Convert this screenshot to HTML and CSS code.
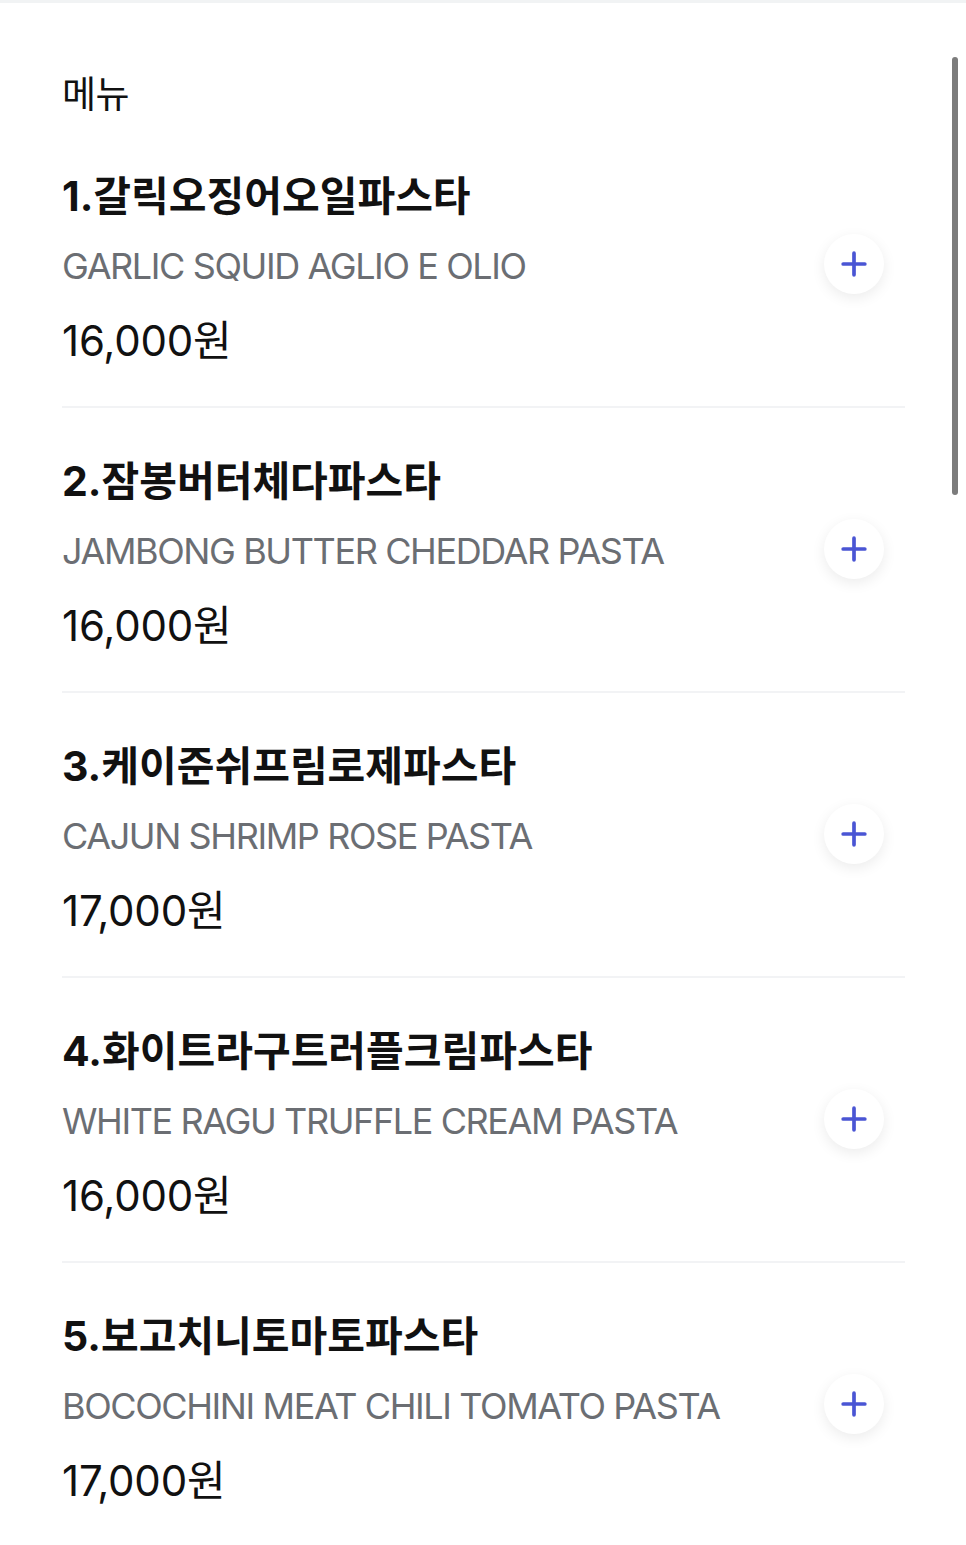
FILE: index.html
```html
<!DOCTYPE html>
<html lang="ko">
<head>
  <meta charset="UTF-8">
  <meta name="viewport" content="width=device-width, initial-scale=1.0">
  <title>메뉴</title>
  <link rel="stylesheet" href="styles.css">
</head>
<body>
  <main class="menu">
    <h2 class="menu-title">메뉴</h2>

    <ul class="menu-list">
      <li class="menu-item">
        <div class="item-text">
          <p class="item-name">1.갈릭오징어오일파스타</p>
          <p class="item-eng">GARLIC SQUID AGLIO E OLIO</p>
          <p class="item-price">16,000원</p>
        </div>
        <button class="add-btn" aria-label="추가">
          <svg viewBox="0 0 24 24" width="26" height="26"><path d="M12 2v20M2 12h20" stroke="currentColor" stroke-width="3.4" stroke-linecap="round"/></svg>
        </button>
      </li>
      <li class="menu-item">
        <div class="item-text">
          <p class="item-name">2.잠봉버터체다파스타</p>
          <p class="item-eng">JAMBONG BUTTER CHEDDAR PASTA</p>
          <p class="item-price">16,000원</p>
        </div>
        <button class="add-btn" aria-label="추가">
          <svg viewBox="0 0 24 24" width="26" height="26"><path d="M12 2v20M2 12h20" stroke="currentColor" stroke-width="3.4" stroke-linecap="round"/></svg>
        </button>
      </li>
      <li class="menu-item">
        <div class="item-text">
          <p class="item-name">3.케이준쉬프림로제파스타</p>
          <p class="item-eng">CAJUN SHRIMP ROSE PASTA</p>
          <p class="item-price">17,000원</p>
        </div>
        <button class="add-btn" aria-label="추가">
          <svg viewBox="0 0 24 24" width="26" height="26"><path d="M12 2v20M2 12h20" stroke="currentColor" stroke-width="3.4" stroke-linecap="round"/></svg>
        </button>
      </li>
      <li class="menu-item">
        <div class="item-text">
          <p class="item-name">4.화이트라구트러플크림파스타</p>
          <p class="item-eng">WHITE RAGU TRUFFLE CREAM PASTA</p>
          <p class="item-price">16,000원</p>
        </div>
        <button class="add-btn" aria-label="추가">
          <svg viewBox="0 0 24 24" width="26" height="26"><path d="M12 2v20M2 12h20" stroke="currentColor" stroke-width="3.4" stroke-linecap="round"/></svg>
        </button>
      </li>
      <li class="menu-item">
        <div class="item-text">
          <p class="item-name">5.보고치니토마토파스타</p>
          <p class="item-eng">BOCOCHINI MEAT CHILI TOMATO PASTA</p>
          <p class="item-price">17,000원</p>
        </div>
        <button class="add-btn" aria-label="추가">
          <svg viewBox="0 0 24 24" width="26" height="26"><path d="M12 2v20M2 12h20" stroke="currentColor" stroke-width="3.4" stroke-linecap="round"/></svg>
        </button>
      </li>
    </ul>
  </main>

  <div class="scrollbar"></div>
</body>
</html>
```

FILE: styles.css
```css
body {
  font-family: Inter, "Noto Sans CJK KR", sans-serif;
  margin: 0;
  padding: 0;
  background-color: #fff;
  color: #111;
}

.menu {
  border-top: 3px solid #f1f3f4;
  padding: 67px 61px 0 62px;
}

.menu-title {
  margin: 0 0 1px;
  font-size: 37px;
  font-weight: 400;
  line-height: 50px;
  letter-spacing: -0.5px;
}

.menu-list {
  list-style: none;
  margin: 0;
  padding: 0;
}

.menu-item {
  display: flex;
  align-items: center;
  justify-content: space-between;
  padding: 40px 0 25px;
  border-bottom: 2px solid #f2f3f5;
}

.menu-item + .menu-item {
  padding-top: 38px;
}

.item-text p {
  margin: 0;
  white-space: nowrap;
}

.item-name {
  font-size: 41px;
  font-weight: 700;
  line-height: 70px;
  letter-spacing: 0;
}

.item-eng {
  font-size: 36px;
  line-height: 70px;
  color: #6b6e73;
  letter-spacing: -1.4px;
}

.item-price {
  font-size: 42px;
  line-height: 80px;
  letter-spacing: -0.2px;
}

.add-btn {
  width: 60px;
  height: 60px;
  margin: -14px 21px 0 0;
  padding: 0;
  border: none;
  border-radius: 50%;
  background: #fff;
  color: #4a55d4;
  box-shadow: 0 4px 14px rgba(0, 0, 0, 0.08);
  display: flex;
  align-items: center;
  justify-content: center;
}

.scrollbar {
  position: fixed;
  top: 57px;
  right: 8px;
  width: 6px;
  height: 438px;
  border-radius: 3px;
  background: #7c7c7c;
}
```
